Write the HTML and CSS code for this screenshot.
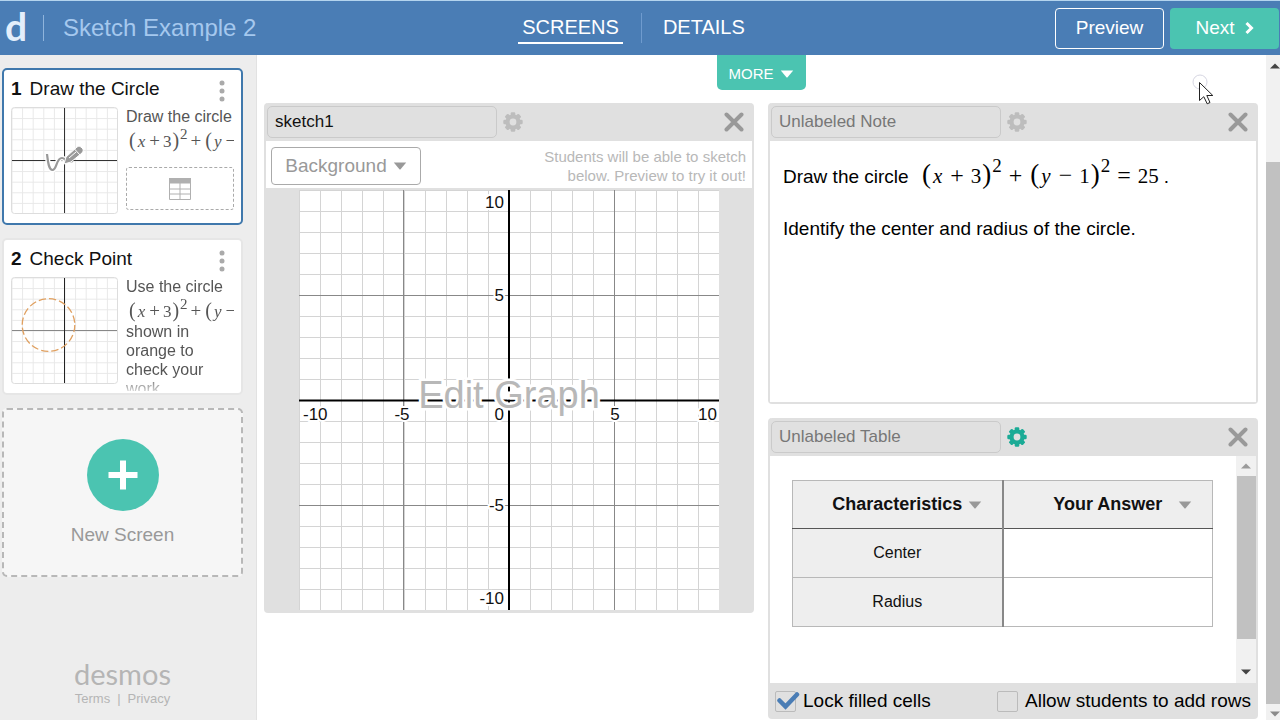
FILE: index.html
```html
<!DOCTYPE html>
<html lang="en">
<head>
<meta charset="utf-8">
<title>Sketch Example 2</title>
<link rel="stylesheet" href="styles.css">
</head>
<body>
<svg class="defs" aria-hidden="true">
  <symbol id="gear" viewBox="0 0 20 20">
    <g fill="currentColor">
      <rect x="7.7" y="0.3" width="4.6" height="19.4" rx="1.2"/>
      <rect x="7.7" y="0.3" width="4.6" height="19.4" rx="1.2" transform="rotate(45 10 10)"/>
      <rect x="7.7" y="0.3" width="4.6" height="19.4" rx="1.2" transform="rotate(90 10 10)"/>
      <rect x="7.7" y="0.3" width="4.6" height="19.4" rx="1.2" transform="rotate(135 10 10)"/>
      <circle cx="10" cy="10" r="7.6"/>
    </g>
    <circle cx="10" cy="10" r="3.4" fill="#e0e0e0"/>
  </symbol>
  <symbol id="close" viewBox="0 0 20 20">
    <path d="M2.5 2.5 L17.5 17.5 M17.5 2.5 L2.5 17.5" stroke="currentColor" stroke-width="4" stroke-linecap="round"/>
  </symbol>
  <symbol id="caret" viewBox="0 0 14 8">
    <path d="M0.8 0.5 H13.2 L7.6 7.3 Q7 7.9 6.4 7.3 Z" fill="currentColor"/>
  </symbol>
  <symbol id="dots" viewBox="0 0 6 22">
    <g fill="currentColor"><circle cx="3" cy="3" r="2.5"/><circle cx="3" cy="11" r="2.5"/><circle cx="3" cy="19" r="2.5"/></g>
  </symbol>
  <pattern id="thumb-grid" x="0.5" y="0.5" width="10.6" height="10.6" patternUnits="userSpaceOnUse">
    <path d="M0 0.5 H11 M0.5 0 V11" stroke="#e8e8e8" fill="none"/>
  </pattern>
  <pattern id="grid" width="21" height="21" patternUnits="userSpaceOnUse">
    <path d="M0 0.5 H21 M0.5 0 V21" stroke="#d4d4d4" fill="none"/>
  </pattern>
</svg>

<header class="topbar">
  <div class="brand">
    <a class="logo" href="#">d</a>
    <span class="brand-rule"></span>
    <h1 class="title">Sketch Example 2</h1>
  </div>
  <nav class="tabs">
    <a class="tab tab-active" href="#">SCREENS</a>
    <span class="tab-rule"></span>
    <a class="tab" href="#">DETAILS</a>
  </nav>
  <div class="actions">
    <button class="btn btn-outline" type="button">Preview</button>
    <button class="btn btn-solid" type="button">Next
      <svg class="chevron" viewBox="0 0 10 14"><path d="M2.5 2 L7.5 7 L2.5 12" fill="none" stroke="currentColor" stroke-width="3"/></svg>
    </button>
  </div>
</header>

<div class="workspace">
  <aside class="sidebar">
    <section class="card card-selected">
      <div class="card-head">
        <h2 class="card-title"><b>1</b>Draw the Circle</h2>
        <button class="icon-btn kebab" type="button" aria-label="Screen 1 options"><svg><use href="#dots"/></svg></button>
      </div>
      <div class="card-body">
        <svg class="thumb" viewBox="0 0 107 107">
          <rect x="0.5" y="0.5" width="106" height="106" rx="3" fill="#fff"/>
          <rect x="1" y="1" width="105" height="105" fill="url(#thumb-grid)"/>
          <rect x="0.5" y="0.5" width="106" height="106" rx="3" fill="none" stroke="#ddd"/>
          <path d="M1 53.5 H106 M53.5 1 V106" stroke="#333"/>
          <path d="M36 47 C37 56 38 63 41.500 63 C46 63 45 51 51 51 C55 51 54 57 62 54" fill="none" stroke="#fff" stroke-width="5"/>
          <path d="M36 47 C37 56 38 63 41.500 63 C46 63 45 51 51 51 C55 51 54 57 62 54" fill="none" stroke="#999" stroke-width="2.200"/>
          <path d="M53 57 L55 50 L66 40 Q68 38 70 40 L72 42 Q73 44 71 46 L60 55 Z" fill="#999" stroke="#fff"/>
          <path d="M63.5 42 L69 48 M58 51 L65 45" stroke="#fff" stroke-width="1"/>
        </svg>
        <div class="card-text">
          <p>Draw the circle</p>
          <p class="math math-small"><span class="paren">(</span><i>x</i><span class="op">+</span>3<span class="paren">)</span><sup>2</sup><span class="op">+</span><span class="paren">(</span><i>y</i><span class="op">−</span></p>
          <div class="table-slot">
            <svg viewBox="0 0 22 22"><path d="M0.5 0.5 H21.5 V21.5 H0.5 Z M11 5 V21.5 M0.5 11 H21.5 M0.5 16 H21.5" fill="none" stroke="#b0b0b0"/><rect width="22" height="5.500" fill="#b0b0b0"/></svg>
          </div>
        </div>
      </div>
    </section>

    <section class="card">
      <div class="card-head">
        <h2 class="card-title"><b>2</b>Check Point</h2>
        <button class="icon-btn kebab" type="button" aria-label="Screen 2 options"><svg><use href="#dots"/></svg></button>
      </div>
      <div class="card-body">
        <svg class="thumb" viewBox="0 0 107 107">
          <rect x="0.5" y="0.5" width="106" height="106" rx="3" fill="#fff"/>
          <rect x="1" y="1" width="105" height="105" fill="url(#thumb-grid)"/>
          <rect x="0.5" y="0.5" width="106" height="106" rx="3" fill="none" stroke="#ddd"/>
          <path d="M1 53.5 H106" stroke="#888"/>
          <path d="M53.5 1 V106" stroke="#222"/>
          <circle cx="37.500" cy="48" r="26.300" fill="none" stroke="#e0a060" stroke-width="1.300" stroke-dasharray="7.300 3"/>
        </svg>
        <div class="card-text card-text-fade">
          <p>Use the circle</p>
          <p class="math math-small"><span class="paren">(</span><i>x</i><span class="op">+</span>3<span class="paren">)</span><sup>2</sup><span class="op">+</span><span class="paren">(</span><i>y</i><span class="op">−</span></p>
          <p>shown in orange to check your work</p>
        </div>
      </div>
    </section>

    <button class="new-screen" type="button">
      <svg class="plus" viewBox="0 0 72 72"><circle cx="36" cy="36" r="36" fill="#4bc4b1"/><path d="M36 24.500 V47.500 M24.500 36 H47.500" stroke="#fff" stroke-width="6" stroke-linecap="square"/></svg>
      <span>New Screen</span>
    </button>

    <footer class="side-foot">
      <div class="wordmark">desmos</div>
      <div class="legal"><a href="#">Terms</a><span>|</span><a href="#">Privacy</a></div>
    </footer>
  </aside>

  <main class="stage">
    <button class="more" type="button">MORE <svg class="caret"><use href="#caret"/></svg></button>
    <div class="columns">
      <section class="panel panel-sketch">
        <div class="panel-head">
          <input class="name" type="text" value="sketch1" aria-label="Sketch name">
          <button class="icon-btn gear" type="button" aria-label="Sketch settings"><svg><use href="#gear"/></svg></button>
          <button class="icon-btn close" type="button" aria-label="Remove sketch"><svg><use href="#close"/></svg></button>
        </div>
        <div class="toolbar">
          <button class="background" type="button">Background <svg class="caret"><use href="#caret"/></svg></button>
          <p class="hint">Students will be able to sketch below. Preview to try it out!</p>
        </div>
        <div class="graph-wrap">
          <svg class="graph" viewBox="0 0 420 420">
            <rect width="420" height="420" fill="#fff"/>
            <rect width="420" height="420" fill="url(#grid)"/>
            <path d="M0 105.500 H420 M0 315.500 H420 M104.500 0 V420 M315.500 0 V420" stroke="#888"/>
            <path d="M0 210.500 H420 M210 0 V420" stroke="#000" stroke-width="2"/>
            <g class="ticks">
              <text x="205" y="18" text-anchor="end">10</text>
              <text x="205" y="111" text-anchor="end">5</text>
              <text x="205" y="321" text-anchor="end">-5</text>
              <text x="205" y="414" text-anchor="end">-10</text>
              <text x="4" y="230">-10</text>
              <text x="103" y="230" text-anchor="middle">-5</text>
              <text x="205" y="230" text-anchor="end">0</text>
              <text x="316" y="230" text-anchor="middle">5</text>
              <text x="418" y="230" text-anchor="end">10</text>
            </g>
            <text class="edit" x="210" y="218" text-anchor="middle">Edit Graph</text>
          </svg>
        </div>
      </section>

      <div class="stack">
        <section class="panel">
          <div class="panel-head">
            <input class="name" type="text" placeholder="Unlabeled Note" aria-label="Note name">
            <button class="icon-btn gear" type="button" aria-label="Note settings"><svg><use href="#gear"/></svg></button>
            <button class="icon-btn close" type="button" aria-label="Remove note"><svg><use href="#close"/></svg></button>
          </div>
          <div class="note">
            <p class="note-line">Draw the circle <span class="math"><span class="paren">(</span><i>x</i><span class="op">+</span>3<span class="paren">)</span><sup>2</sup><span class="op">+</span><span class="paren">(</span><i>y</i><span class="op">−</span>1<span class="paren">)</span><sup>2</sup><span class="op">=</span>25</span>.</p>
            <p>Identify the center and radius of the circle.</p>
          </div>
        </section>

        <section class="panel">
          <div class="panel-head">
            <input class="name" type="text" placeholder="Unlabeled Table" aria-label="Table name">
            <button class="icon-btn gear gear-on" type="button" aria-label="Table settings"><svg><use href="#gear"/></svg></button>
            <button class="icon-btn close" type="button" aria-label="Remove table"><svg><use href="#close"/></svg></button>
          </div>
          <div class="scroller">
            <div class="table-pad">
              <table class="answers">
                <thead>
                  <tr>
                    <th>Characteristics<button class="icon-btn col-menu" type="button" aria-label="Characteristics column menu"><svg class="caret"><use href="#caret"/></svg></button></th>
                    <th>Your Answer<button class="icon-btn col-menu" type="button" aria-label="Your Answer column menu"><svg class="caret"><use href="#caret"/></svg></button></th>
                  </tr>
                </thead>
                <tbody>
                  <tr><td class="locked">Center</td><td></td></tr>
                  <tr><td class="locked">Radius</td><td></td></tr>
                </tbody>
              </table>
            </div>
            <div class="bar bar-inner">
              <svg viewBox="0 0 10 6"><path d="M0 5.500 L5 0.500 L10 5.500 Z" fill="#9b9b9b"/></svg>
              <div class="thumb-track"><div class="bar-thumb"></div></div>
              <svg viewBox="0 0 10 6"><path d="M0 0.500 L5 5.500 L10 0.500 Z" fill="#444"/></svg>
            </div>
          </div>
          <div class="options">
            <label class="option"><span class="box"><input type="checkbox" checked><svg class="tick" viewBox="0 0 24 20"><path d="M3.500 9.500 L9.500 15.500 L21 3.500" fill="none" stroke="#4a7db5" stroke-width="4.500" stroke-linecap="round"/></svg></span>Lock filled cells</label>
            <label class="option"><span class="box"><input type="checkbox"></span>Allow students to add rows</label>
          </div>
        </section>
      </div>
    </div>
  </main>

  <div class="bar bar-page">
    <svg viewBox="0 0 10 6"><path d="M0 5.500 L5 0.500 L10 5.500 Z" fill="#444"/></svg>
    <div class="thumb-track"><div class="bar-thumb"></div></div>
    <svg viewBox="0 0 10 6"><path d="M0 0.500 L5 5.500 L10 0.500 Z" fill="#8a8a8a"/></svg>
  </div>
</div>

<svg class="cursor" viewBox="0 0 24 32">
  <circle cx="8" cy="8" r="7" fill="none" stroke="#d6d6e2"/>
  <path d="M7.500 8.500 V26.500 L11.800 22.700 L15.200 29.800 L18 28.500 L14.800 21.500 H20.800 Z" fill="#fff" stroke="#222"/>
</svg>
</body>
</html>
```
FILE: styles.css
```css
* { box-sizing: border-box; }

body {
  margin: 0;
  height: 100vh;
  display: flex;
  flex-direction: column;
  overflow: hidden;
  background: #fff;
  color: #111;
  font-family: "Liberation Sans", Arial, sans-serif;
  font-size: 19px;
}

h1, h2, p { margin: 0; font-weight: normal; }
a { color: inherit; text-decoration: none; }
button, input { font: inherit; color: inherit; }
button { border: 0; background: none; padding: 0; }
svg { display: block; }
.defs { position: absolute; width: 0; height: 0; }

.icon-btn { display: flex; align-items: center; justify-content: center; }
.caret { width: 14px; height: 8px; }

/* Top bar */
.topbar {
  flex: none;
  height: 55px;
  display: grid;
  grid-template-columns: 1fr auto 1fr;
  align-items: center;
  padding: 0 1px 0 5px;
  border-top: 1px solid #b4d4ee;
  background: #4a7db5;
  color: #fff;
}
.brand { display: flex; align-items: center; }
.logo {
  width: 22px;
  padding-bottom: 4px;
  font-family: Lato, sans-serif;
  font-size: 39px;
  line-height: 44px;
  font-weight: bold;
  color: #e3eefb;
}
.brand-rule { width: 1px; height: 26px; margin: 0 19px 0 16px; background: #8fb4dc; }
.title { font-size: 24px; color: #a5c8ee; }
.tabs { display: flex; align-items: center; font-size: 20px; margin-right: 17px; }
.tab { padding: 4px 4px 5px; border-bottom: 2px solid transparent; line-height: 20px; }
.tab-active { border-color: #fff; }
.tab-rule { width: 1px; height: 30px; margin: 0 17px 0 18px; background: #6f9bce; }
.actions { display: flex; justify-content: flex-end; gap: 6px; }
.btn {
  width: 109px;
  height: 41px;
  border-radius: 4px;
  display: flex;
  align-items: center;
  justify-content: center;
  gap: 9px;
}
.btn-outline { border: 1px solid #fff; }
.btn-solid { background: #4bc4b1; }
.chevron { width: 10px; height: 14px; }

.workspace { flex: 1; min-height: 0; display: flex; }

/* Sidebar */
.sidebar {
  flex: none;
  width: 257px;
  padding: 13px 13px 13px 2px;
  display: flex;
  flex-direction: column;
  gap: 13px;
  background: #ededed;
  border-right: 1px solid #e2e2e2;
}
.card {
  padding: 0 7px 9px;
  border: 2px solid #e6e6e6;
  border-radius: 5px;
  background: #fff;
}
.card-selected { border-color: #3f78ac; }
.card-head { display: flex; justify-content: space-between; align-items: center; height: 37px; }
.card-title { font-size: 19px; }
.card-title b { margin-right: 8px; }
.kebab { width: 24px; height: 36px; padding-top: 4px; }
.kebab svg { width: 6px; height: 22px; color: #aaa; }
.card-body { display: grid; grid-template-columns: 107px 1fr; gap: 8px; height: 107px; }
.thumb { width: 107px; height: 107px; }
.card-text {
  height: 114px;
  overflow: hidden;
  font-size: 16px;
  line-height: 19px;
  color: #555;
}
.card-text-fade {
  -webkit-mask-image: linear-gradient(#000 98px, transparent 120px);
  mask-image: linear-gradient(#000 98px, transparent 120px);
}
.table-slot {
  display: flex;
  align-items: center;
  justify-content: center;
  height: 43px;
  margin-top: 15px;
  border: 1px dashed #aaa;
  border-radius: 3px;
}
.table-slot svg { width: 22px; height: 22px; }
.new-screen {
  height: 169px;
  display: flex;
  flex-direction: column;
  align-items: center;
  justify-content: center;
  gap: 13px;
  border: 2px dashed #b8b8b8;
  border-radius: 5px;
  background: #f6f6f6;
  color: #999;
}
.plus { width: 72px; height: 72px; }
.side-foot { margin-top: auto; text-align: center; color: #b5b5b5; }
.wordmark { font-family: Lato, sans-serif; font-size: 29px; line-height: 32px; }
.legal { display: flex; justify-content: center; gap: 7px; font-size: 13px; line-height: 17px; }

/* Formulas */
.math {
  display: inline-flex;
  align-items: baseline;
  font-family: "Liberation Serif", serif;
  font-size: 21px;
  line-height: 24px;
  margin: 0 5px 0 7px;
}
.math .paren { font-size: 27px; margin: 0 1px; }
.math i { margin: 0 1px; }
.math .op { margin: 0 7px; font-size: 24px; }
.math sup { align-self: flex-start; font-size: 19px; line-height: 8px; }
.math-small { display: flex; height: 26px; margin: 0 0 0 2px; padding-top: 2px; font-size: 17px; white-space: nowrap; }
.math-small .paren { font-size: 20px; }
.math-small .op { margin: 0 3px; font-size: 19px; }
.math-small sup { font-size: 15px; line-height: 12px; }

/* Stage */
.stage { flex: 1; min-width: 0; display: flex; flex-direction: column; padding: 0 8px 1px 7px; }
.more {
  align-self: center;
  display: flex;
  align-items: center;
  justify-content: center;
  gap: 6px;
  width: 89px;
  height: 35px;
  margin-bottom: 13px;
  padding-top: 2px;
  border-radius: 0 0 5px 5px;
  background: #4bc4b1;
  color: #fff;
  font-size: 15px;
}
.columns { flex: 1; min-height: 0; display: grid; grid-template-columns: 1fr 1fr; gap: 14px; }
.stack { min-height: 0; display: grid; grid-template-rows: 1fr 1fr; gap: 14px; }
.panel {
  min-height: 0;
  display: flex;
  flex-direction: column;
  border: 2px solid #e0e0e0;
  border-top: 0;
  border-radius: 4px;
  background: #e0e0e0;
}
.panel-sketch { align-self: start; }
.panel-head { flex: none; height: 38px; display: flex; align-items: center; padding: 0 10px 0 1px; }
.name {
  width: 230px;
  height: 32px;
  padding: 0 7px;
  border: 1px solid #cacaca;
  border-radius: 5px;
  background: transparent;
  font-size: 17px;
}
.name::placeholder { color: #777; opacity: 1; }
.gear { margin-left: 6px; color: #bdbdbd; }
.gear svg { width: 20px; height: 20px; }
.gear-on { color: #1bab96; }
.close { margin-left: auto; margin-right: -2px; color: #999; }
.close svg { width: 20px; height: 20px; }

.toolbar {
  height: 47px;
  display: flex;
  align-items: center;
  justify-content: space-between;
  padding: 2px 6px 0 5px;
  background: #fff;
}
.background {
  display: flex;
  align-items: center;
  justify-content: center;
  gap: 6px;
  width: 150px;
  height: 38px;
  border: 1px solid #aaa;
  border-radius: 4px;
  color: #999;
}
.hint { width: 220px; font-size: 15px; line-height: 19px; text-align: right; color: #b8b8b8; }
.graph-wrap { display: flex; justify-content: center; padding: 2px 0 1px; }
.graph { width: 420px; max-width: 100%; }
.ticks { font-size: 17px; fill: #111; stroke: #fff; stroke-width: 4px; paint-order: stroke; }
.edit { font-size: 38px; fill: #b8b8b8; stroke: #fff; stroke-width: 5px; paint-order: stroke; }

.note { flex: 1; padding: 21px 13px; background: #fff; color: #000; line-height: 24px; }
.note-line { margin-bottom: 28px; }

.scroller { flex: 1; min-height: 0; display: flex; background: #fff; }
.table-pad { flex: 1; padding: 24px 23px 0 22px; }
.answers { width: 100%; table-layout: fixed; border-collapse: collapse; }
.answers th, .answers td { height: 49px; padding: 0; border: 1px solid #b8b8b8; text-align: center; }
.answers th { position: relative; height: 48px; background: #eee; font-size: 18px; border-bottom-color: #555; }
.answers td { font-size: 16px; }
.answers .locked { background: #eee; }
.answers th:first-child, .answers td:first-child { border-right: 2px solid #888; }
.col-menu { position: absolute; top: 20px; right: 20px; color: #999; }

.options { flex: none; display: flex; justify-content: space-between; align-items: center; height: 34px; padding: 2px 5px 0; color: #000; }
.option { display: flex; align-items: center; gap: 7px; }
.box { position: relative; display: block; width: 21px; height: 21px; }
.box input {
  appearance: none;
  display: block;
  width: 21px;
  height: 21px;
  margin: 0;
  border: 1px solid #bbb;
  border-radius: 2px;
}
.tick { position: absolute; left: 1px; top: 0; width: 24px; height: 20px; }

/* Scrollbars */
.bar { flex: none; display: flex; flex-direction: column; align-items: center; background: #f1f1f1; }
.bar svg { flex: none; width: 10px; height: 6px; }
.bar .thumb-track { flex: 1; align-self: stretch; display: flex; }
.bar-thumb { flex: 1; background: #c1c1c1; }
.bar-inner { width: 20px; padding: 7px 0 8px; }
.bar-inner .thumb-track { padding: 7px 0 30px 1px; }
.bar-page { width: 14px; padding: 8px 0 3px; align-items: flex-end; }
.bar-page .thumb-track { padding: 93px 0 7px; }

.cursor { position: absolute; left: 1192px; top: 74px; width: 24px; height: 32px; }
```
